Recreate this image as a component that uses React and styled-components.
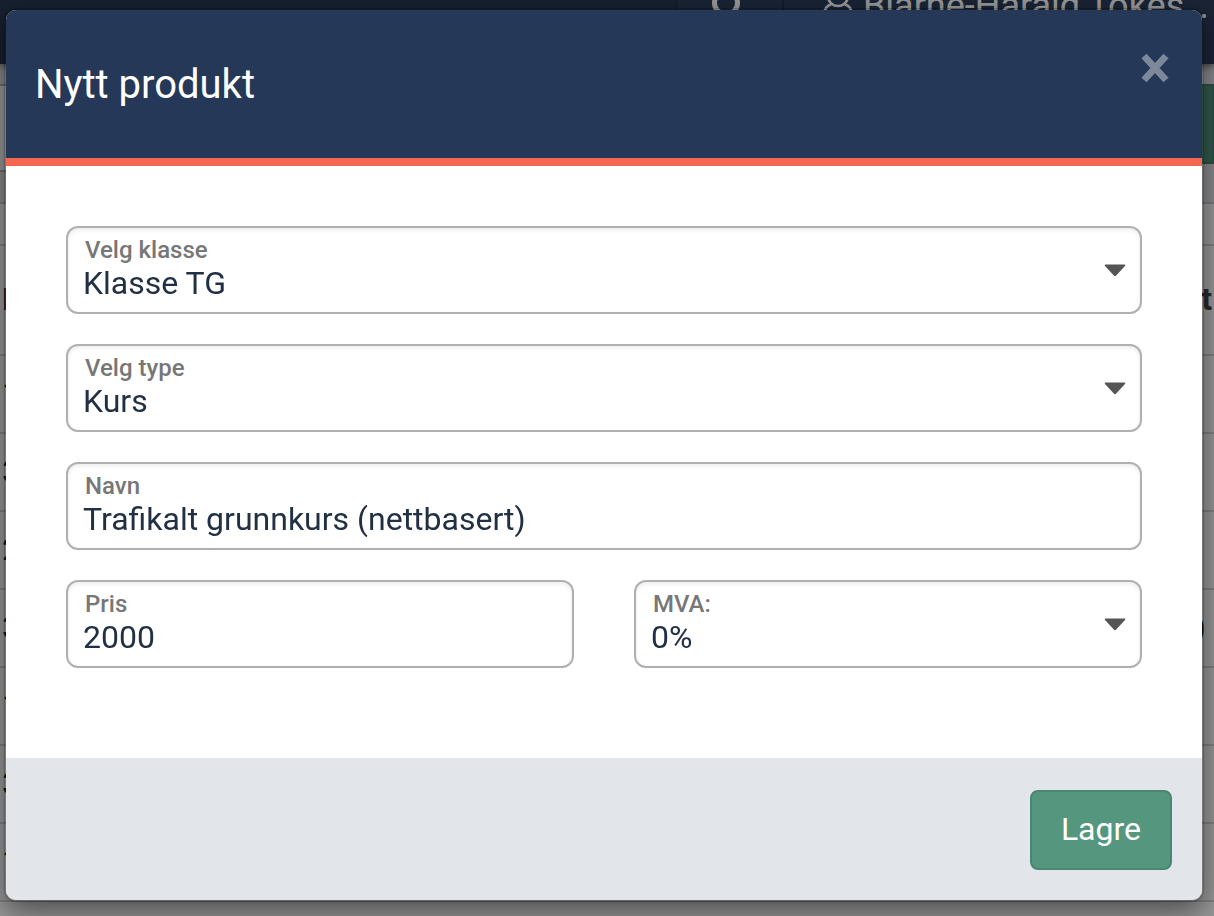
import React, { useState } from "react";
import styled, { createGlobalStyle } from "styled-components";

const GlobalStyle = createGlobalStyle`
    * {
        box-sizing: border-box;
    }

    body {
        margin: 0;
        overflow: hidden;
        font-family: Roboto, "Liberation Sans", sans-serif;
        background: #FFFFFF;
    }
`

const Page = styled.div`
    width: 100%;
    height: 100vh;
    overflow: hidden;
`

const TopBar = styled.header`
    position: relative;
    display: flex;
    justify-content: flex-end;
    height: 64px;
    background: #263650;
    box-shadow: 0 2px 8px rgba(0, 0, 0, 0.6);
`

const TopItem = styled.div`
    display: flex;
    padding-left: 34px;
    width: ${props => props.$width};
    background: #2C3D5A;
    border-left: 2px solid #22304A;
    color: #FFFFFF;
    font-size: 36px;
    line-height: 12px;
    white-space: nowrap;

    svg {
        flex: none;
        margin-right: 7px;
    }
`

const ActionBar = styled.div`
    display: flex;
    justify-content: space-between;
    height: 140px;
    padding-top: 20px;
    background: #E2E5EA;
    border-bottom: 2px solid #C9CCD2;
`

const Tab = styled.div`
    width: 120px;
    height: 88px;
    background: #FFFFFF;
    border: solid #B4B7BB;
    border-width: 2px 0;
`

const AddButton = styled.button`
    width: 200px;
    height: 80px;
    border: 2px solid #4A8671;
    background: #55967F;
`

const Table = styled.table`
    width: 100%;
    border-spacing: 0;
    color: #222222;
    font-size: 32px;

    th, td {
        height: 78px;
        padding: 0 8px 2px 2px;
        text-align: left;
        border-bottom: 2px solid #D8D8D8;
    }

    th {
        height: 110px;
        padding-right: 2px;
        color: #444444;
    }

    tr.spacer td {
        height: 42px;
    }

    th:last-child, td:last-child {
        text-align: right;
    }
`

const Backdrop = styled.div`
    position: fixed;
    inset: 0;
    padding: 8px 10px 0 4px;
    background: rgba(0, 0, 0, 0.4);
`

const Dialog = styled.form`
    border: 2px solid rgba(0, 0, 0, 0.2);
    border-radius: 12px;
    background: #FFFFFF;
    background-clip: padding-box;
    box-shadow: 0 10px 30px rgba(0, 0, 0, 0.5);
`

const DialogHeader = styled.div`
    display: flex;
    justify-content: space-between;
    align-items: flex-start;
    height: 156px;
    padding: 42px 32px 0 29px;
    background: #253858;
    border-bottom: 8px solid #F46851;
    border-radius: 10px 10px 0 0;
`

const Title = styled.h1`
    margin: 9px 0 0;
    color: #FFFFFF;
    font-size: 40px;
    font-weight: 400;
    line-height: 48px;
`

const CloseButton = styled.button`
    display: flex;
    padding: 0;
    border: 0;
    background: none;
    color: #7D889A;
    cursor: pointer;
`

const DialogBody = styled.div`
    display: grid;
    grid-template-columns: 1fr 1fr;
    gap: 30px 60px;
    padding: 60px 60px 90px;
`

const Field = styled.div`
    position: relative;
    display: flex;
    flex-direction: column;
    grid-column: ${props => props.$half ? 'auto' : '1 / -1'};
    height: 88px;
    padding: 8px 15px 0;
    border: 2px solid #B0B0B0;
    border-radius: 12px;
    background: #FFFFFF;
    box-shadow: inset 0 2px 4px rgba(0, 0, 0, 0.08);
`

const Label = styled.label`
    padding-left: 2px;
    color: #777777;
    font-size: 24px;
    font-weight: 500;
    line-height: 28px;
`

const Input = styled.input`
    width: 100%;
    height: 38px;
    padding: 0;
    border: 0;
    outline: none;
    background: transparent;
    color: #223044;
    font: 400 32px/38px Roboto, "Liberation Sans", sans-serif;
`

const Select = styled(Input).attrs({ as: 'select' })`
    appearance: none;
    cursor: pointer;
`

const Caret = styled.svg`
    position: absolute;
    top: 36px;
    right: 14px;
    pointer-events: none;
`

const DialogFooter = styled.div`
    display: flex;
    justify-content: flex-end;
    padding: 32px 30px 30px;
    background: #E2E5EA;
    border-radius: 0 0 10px 10px;
`

const SaveButton = styled.button`
    height: 80px;
    padding: 0 29px 2px;
    border: 2px solid #4A8671;
    border-radius: 8px;
    background: #55967F;
    color: #FFFFFF;
    font: 400 32px/38px Roboto, "Liberation Sans", sans-serif;
    cursor: pointer;
`

const rows = [
    ['1', ''],
    ['3', ''],
    ['2', ''],
    ['3', '(0)'],
    ['1', ''],
    ['3', ''],
    ['1', ''],
    ['', ''],
]

const SelectField = ({ id, label, options, half }) => {
    const [value, setValue] = useState(options[0])

    return (
        <Field $half={half}>
            <Label htmlFor={id}>{label}</Label>
            <Select id={id} value={value} onChange={e => setValue(e.target.value)}>
                {options.map(option => <option key={option}>{option}</option>)}
            </Select>
            <Caret width="22" height="13" viewBox="0 0 22 13">
                <path d="M1.5 0.5H20.5Q22 0.8 21 2L12.2 11.6Q11 12.8 9.8 11.6L1 2Q0 0.8 1.5 0.5Z" fill="#555555"/>
            </Caret>
        </Field>
    )
}

const TextField = ({ id, label, initial, half }) => {
    const [value, setValue] = useState(initial)

    return (
        <Field $half={half}>
            <Label htmlFor={id}>{label}</Label>
            <Input id={id} type="text" value={value} onChange={e => setValue(e.target.value)}/>
        </Field>
    )
}

const App = () => {
    return (
        <>
            <GlobalStyle/>
            <Page>
                <TopBar>
                    <TopItem $width="106px">
                        <svg width="28" height="20" viewBox="0 0 28 20" fill="none" stroke="#FFFFFF" strokeWidth="5">
                            <circle cx="14" cy="3" r="11.5"/>
                        </svg>
                    </TopItem>
                    <TopItem $width="432px">
                        <svg width="38" height="18" viewBox="0 0 38 18" fill="none" stroke="#FFFFFF" strokeWidth="2.6">
                            <circle cx="20" cy="-4" r="10"/>
                            <path d="M6 14Q7 6 13 4.5M27 4.5Q33 6 34 14"/>
                        </svg>
                        Bjarne-Harald Tokes…
                    </TopItem>
                </TopBar>
                <ActionBar>
                    <Tab/>
                    <AddButton type="button" aria-label="Nytt produkt"/>
                </ActionBar>
                <Table>
                    <tbody>
                        <tr className="spacer"><td/><td/></tr>
                        <tr><th>N</th><th>t</th></tr>
                        {rows.map((row, i) => (
                            <tr key={i}><td>{row[0]}</td><td>{row[1]}</td></tr>
                        ))}
                    </tbody>
                </Table>
            </Page>
            <Backdrop>
                <Dialog role="dialog" aria-labelledby="dialog-title" onSubmit={e => e.preventDefault()}>
                    <DialogHeader>
                        <Title id="dialog-title">Nytt produkt</Title>
                        <CloseButton type="button" aria-label="Lukk">
                            <svg width="30" height="32" viewBox="0 0 30 32" stroke="currentColor" strokeWidth="7">
                                <path d="M4 4L26 28M26 4L4 28"/>
                            </svg>
                        </CloseButton>
                    </DialogHeader>
                    <DialogBody>
                        <SelectField id="klasse" label="Velg klasse" options={['Klasse TG', 'Klasse B']}/>
                        <SelectField id="type" label="Velg type" options={['Kurs', 'Time']}/>
                        <TextField id="navn" label="Navn" initial="Trafikalt grunnkurs (nettbasert)"/>
                        <TextField id="pris" label="Pris" initial="2000" half/>
                        <SelectField id="mva" label="MVA:" options={['0%', '25%']} half/>
                    </DialogBody>
                    <DialogFooter>
                        <SaveButton type="submit">Lagre</SaveButton>
                    </DialogFooter>
                </Dialog>
            </Backdrop>
        </>
    )
}

export default App;
